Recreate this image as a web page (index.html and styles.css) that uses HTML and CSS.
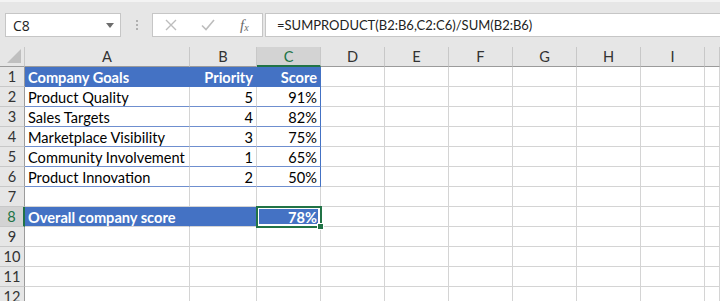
FILE: index.html
```html
<!DOCTYPE html>
<html>
<head>
<meta charset="utf-8">
<link rel="stylesheet" href="styles.css">
</head>
<body>
<div class="app">
  <div class="toolbar">
    <div class="namebox">
      <span class="name">C8</span>
      <svg class="caret" width="8" height="5" viewBox="0 0 8 5"><path d="M0 0H8L4 5Z" fill="#6d6d6d"/></svg>
    </div>
    <div class="grip"><span></span><span></span><span></span></div>
    <div class="fbuttons">
      <svg class="ico" width="12" height="12" viewBox="0 0 12 12"><path d="M1 1L11 11M11 1L1 11" stroke="#bdbdbd" stroke-width="1.4" fill="none"/></svg>
      <svg class="ico" width="14" height="12" viewBox="0 0 14 12"><path d="M1 6.5L5 10.5L13 1" stroke="#bdbdbd" stroke-width="1.6" fill="none"/></svg>
      <span class="fx">f<sub>x</sub></span>
    </div>
    <div class="formula">=SUMPRODUCT(B2:B6,C2:C6)/SUM(B2:B6)</div>
  </div>
  <div class="sheet">
    <div class="ch corner"><svg width="14" height="14" viewBox="0 0 14 14"><path d="M14 0V14H0Z" fill="#bfbfbf"/></svg></div>
    <div class="ch">A</div><div class="ch">B</div><div class="ch sel">C</div><div class="ch">D</div><div class="ch">E</div><div class="ch">F</div><div class="ch">G</div><div class="ch">H</div><div class="ch">I</div><div class="ch"></div>

    <div class="rh">1</div>
    <div class="c th tl">Company Goals</div><div class="c th r">Priority</div><div class="c th r tr">Score</div>
    <div class="c"></div><div class="c"></div><div class="c"></div><div class="c"></div><div class="c"></div><div class="c"></div><div class="c"></div>

    <div class="rh">2</div>
    <div class="c tb tl">Product Quality</div><div class="c tb r">5</div><div class="c tb r tr">91%</div>
    <div class="c"></div><div class="c"></div><div class="c"></div><div class="c"></div><div class="c"></div><div class="c"></div><div class="c"></div>

    <div class="rh">3</div>
    <div class="c tb tl">Sales Targets</div><div class="c tb r">4</div><div class="c tb r tr">82%</div>
    <div class="c"></div><div class="c"></div><div class="c"></div><div class="c"></div><div class="c"></div><div class="c"></div><div class="c"></div>

    <div class="rh">4</div>
    <div class="c tb tl">Marketplace Visibility</div><div class="c tb r">3</div><div class="c tb r tr">75%</div>
    <div class="c"></div><div class="c"></div><div class="c"></div><div class="c"></div><div class="c"></div><div class="c"></div><div class="c"></div>

    <div class="rh">5</div>
    <div class="c tb tl">Community Involvement</div><div class="c tb r">1</div><div class="c tb r tr">65%</div>
    <div class="c"></div><div class="c"></div><div class="c"></div><div class="c"></div><div class="c"></div><div class="c"></div><div class="c"></div>

    <div class="rh">6</div>
    <div class="c tb tl">Product Innovation</div><div class="c tb r">2</div><div class="c tb r tr">50%</div>
    <div class="c"></div><div class="c"></div><div class="c"></div><div class="c"></div><div class="c"></div><div class="c"></div><div class="c"></div>

    <div class="rh">7</div>
    <div class="c"></div><div class="c"></div><div class="c"></div><div class="c"></div><div class="c"></div><div class="c"></div><div class="c"></div><div class="c"></div><div class="c"></div><div class="c"></div>

    <div class="rh rsel">8</div>
    <div class="c fill">Overall company score</div><div class="c fill"></div><div class="c fill r active">78%<span class="handle"></span></div>
    <div class="c"></div><div class="c"></div><div class="c"></div><div class="c"></div><div class="c"></div><div class="c"></div><div class="c"></div>

    <div class="rh">9</div>
    <div class="c"></div><div class="c"></div><div class="c"></div><div class="c"></div><div class="c"></div><div class="c"></div><div class="c"></div><div class="c"></div><div class="c"></div><div class="c"></div>

    <div class="rh">10</div>
    <div class="c"></div><div class="c"></div><div class="c"></div><div class="c"></div><div class="c"></div><div class="c"></div><div class="c"></div><div class="c"></div><div class="c"></div><div class="c"></div>

    <div class="rh">11</div>
    <div class="c"></div><div class="c"></div><div class="c"></div><div class="c"></div><div class="c"></div><div class="c"></div><div class="c"></div><div class="c"></div><div class="c"></div><div class="c"></div>

    <div class="rh">12</div>
    <div class="c"></div><div class="c"></div><div class="c"></div><div class="c"></div><div class="c"></div><div class="c"></div><div class="c"></div><div class="c"></div><div class="c"></div><div class="c"></div>
  </div>
</div>
</body>
</html>
```

FILE: styles.css
```css
html, body {
  margin: 0;
  padding: 0;
  background: #ffffff;
  overflow: hidden;
}
.app {
  width: 720px;
  height: 301px;
  overflow: hidden;
  font-family: Lato, "Liberation Sans", sans-serif;
}
.toolbar {
  height: 47px;
  box-sizing: border-box;
  background: #e6e6e6;
  border-top: 2px solid #f3f3f3;
  display: flex;
  align-items: flex-start;
  padding: 11px 0 0 5px;
}
.namebox {
  width: 116px;
  height: 24px;
  box-sizing: border-box;
  background: #fff;
  border: 1px solid #c6c6c6;
  display: flex;
  align-items: center;
  justify-content: space-between;
  padding: 0 6px 0 7px;
}
.name {
  font-family: "Open Sans", sans-serif;
  font-size: 14px;
  color: #222;
}
.caret { margin-top: 1px; }
.grip {
  width: 31px;
  height: 24px;
  display: flex;
  flex-direction: column;
  align-items: center;
  justify-content: center;
  gap: 2px;
}
.grip span {
  width: 2px;
  height: 2px;
  background: #b0b0b0;
}
.fbuttons {
  width: 111px;
  height: 24px;
  box-sizing: border-box;
  background: #fff;
  border: 1px solid #c6c6c6;
  display: flex;
  align-items: center;
  padding-left: 12px;
  gap: 24px;
}
.fx {
  font-family: "Liberation Serif", serif;
  font-style: italic;
  font-size: 15px;
  color: #6a6a6a;
  margin-left: 1px;
}
.fx sub {
  font-size: 10px;
  vertical-align: -1px;
}
.formula {
  flex: 1;
  height: 24px;
  box-sizing: border-box;
  margin-left: 2px;
  background: #fff;
  border: 1px solid #c6c6c6;
  border-right: none;
  padding-left: 11px;
  font-size: 13px;
  line-height: 22px;
  color: #222;
}
.sheet {
  display: grid;
  grid-template-columns: 25px 165px 67px 64px 64px 64px 64px 64px 64px 64px 15px;
  grid-template-rows: 20px repeat(12, 20px);
  font-size: 14.6px;
  color: #000;
}
.ch {
  background: #e6e6e6;
  border-right: 1px solid #c8c8c8;
  border-bottom: 1px solid #9b9b9b;
  box-sizing: border-box;
  text-align: center;
  line-height: 20px;
  color: #333;
  font-size: 14.6px;
}
.ch.corner {
  position: relative;
  border-right: 1px solid #c8c8c8;
  display: flex;
  align-items: flex-end;
  justify-content: flex-end;
  padding: 0 3px 3px 0;
}
.ch.sel {
  background: #d3d3d3;
  border-bottom: 2px solid #217346;
  color: #217346;
}
.rh {
  background: #e6e6e6;
  border-right: 1px solid #9b9b9b;
  border-bottom: 1px solid #c8c8c8;
  box-sizing: border-box;
  text-align: center;
  line-height: 20px;
  color: #333;
}
.rh.rsel {
  background: #d3d3d3;
  color: #217346;
  border-right: 2px solid #217346;
}
.c {
  box-sizing: border-box;
  border-right: 1px solid #d4d4d4;
  border-bottom: 1px solid #d4d4d4;
  padding: 0 3px;
  line-height: 21px;
  white-space: nowrap;
  overflow: visible;
  position: relative;
}
.c.r { text-align: right; }
.c.th {
  background: #4472c4;
  color: #fff;
  font-weight: bold;
  border-right-color: #4472c4;
  border-bottom-color: #4472c4;
}
.c.tb {
  border-bottom-color: #6f8fcf;
}
.c.tr { border-right-color: #4472c4; }
.c.fill {
  background: #4472c4;
  color: #fff;
  font-weight: bold;
  border-right-color: #4472c4;
  border-bottom-color: #d4d4d4;
}
.c.active {
  outline: 2px solid #217346;
  outline-offset: -1px;
  box-shadow: inset 0 0 0 2px #ffffff;
  z-index: 2;
}
.handle {
  position: absolute;
  right: -4px;
  bottom: -4px;
  width: 5px;
  height: 5px;
  background: #217346;
  border: 1px solid #fff;
}
```
